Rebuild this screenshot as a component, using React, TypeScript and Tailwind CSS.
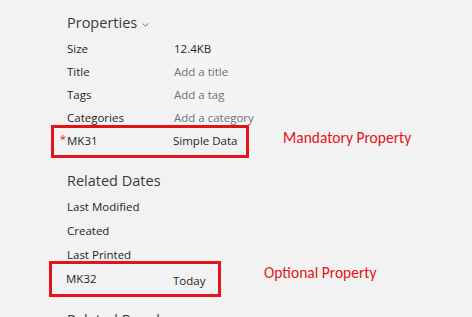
import React from "react";

const ui = { fontFamily: '"Segoe UI", "Open Sans", sans-serif' };
const note = { fontFamily: 'Calibri, Lato, sans-serif' };

type Row = { label: string; value?: string; placeholder?: boolean };

const props: Row[] = [
  { label: "Size", value: "12.4KB" },
  { label: "Title", value: "Add a title", placeholder: true },
  { label: "Tags", value: "Add a tag", placeholder: true },
  { label: "Categories", value: "Add a category", placeholder: true },
];

const dates: Row[] = [
  { label: "Last Modified" },
  { label: "Created" },
  { label: "Last Printed" },
];

const Chevron = () => (
  <svg width="7" height="4" viewBox="0 0 7 4" className="ml-[5px] mt-[3px]">
    <path d="M0.5 0.5 L3.5 3.2 L6.5 0.5" fill="none" stroke="#777" strokeWidth="1" />
  </svg>
);

const PropRow = ({ row, h }: { row: Row; h: string }) => (
  <div className={`flex items-center pl-[16px] ${h}`}>
    <div className="w-[106px] text-[11.5px] text-[#262626] whitespace-nowrap">{row.label}</div>
    {row.value !== undefined && (
      <div
        className={`w-[158px] h-full flex items-center pl-[1px] bg-[#f4f4f4] text-[11.5px] whitespace-nowrap ${
          row.placeholder ? "text-[#707070]" : "text-[#262626]"
        }`}
      >
        {row.value}
      </div>
    )}
  </div>
);

export default function App() {
  return (
    <div
      className="w-[472px] h-[317px] overflow-hidden bg-[#f2f2f2] pl-[51px] pt-[11px]"
      style={ui}
    >
      <div className="flex items-center pl-[16px] h-[24px] text-[14.5px] text-[#3a3a3a]">
        Properties
        <Chevron />
      </div>
      <div className="mt-[2px]">
        {props.map((r) => (
          <PropRow key={r.label} row={r} h="h-[23px]" />
        ))}
      </div>

      <div className="flex items-center -mt-[4px]">
        <div className="w-[198px] border-[3px] border-[#e3121b] pt-[1px] pb-[3px]">
          <div className="flex items-center h-[23px] pl-[13px] text-[11.5px] text-[#262626] whitespace-nowrap">
            <span className="relative w-[106px]">
              <span className="absolute right-full top-[-2px] mr-[1px] text-[#d9262c]">*</span>
              MK31
            </span>
            <span>Simple Data</span>
          </div>
        </div>
        <div className="ml-[34px] mb-[7px] text-[15.5px] text-[#e3121b] whitespace-nowrap" style={note}>
          Mandatory Property
        </div>
      </div>

      <div className="mt-[12px] flex items-center pl-[16px] h-[22px] text-[14.5px] text-[#3a3a3a]">
        Related Dates
      </div>
      <div className="mt-[3px]">
        {dates.map((r) => (
          <PropRow key={r.label} row={r} h="h-[24px]" />
        ))}
      </div>

      <div className="flex items-center -mt-[6px] -ml-[2px]">
        <div className="w-[172px] border-[3px] border-[#e3121b] pt-[3px] pb-[3px]">
          <div className="flex items-center h-[24px] pl-[14px] text-[11.5px] text-[#262626] whitespace-nowrap">
            <span className="w-[107px]">MK32</span>
            <span className="mt-[3px]">Today</span>
          </div>
        </div>
        <div className="ml-[43px] mb-[12px] text-[15.5px] text-[#e3121b] whitespace-nowrap" style={note}>
          Optional Property
        </div>
      </div>

      <div className="mt-[12px] flex items-center pl-[16px] h-[22px] text-[14.5px] text-[#3a3a3a]">
        Related People
      </div>
    </div>
  );
}
